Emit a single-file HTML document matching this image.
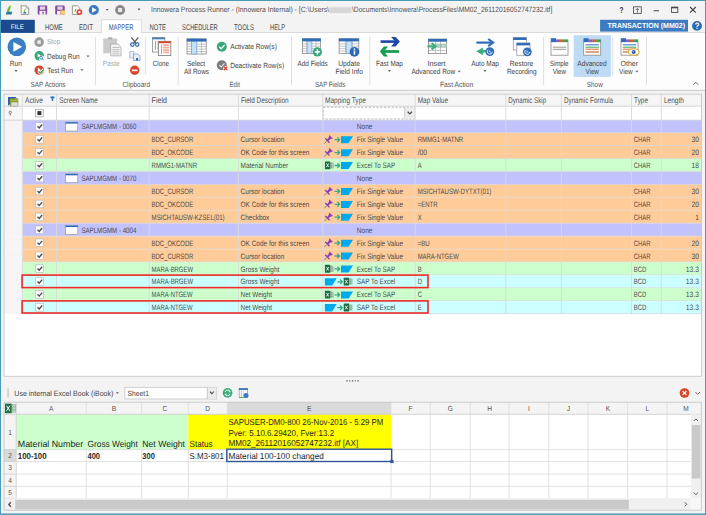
<!DOCTYPE html>
<html><head><meta charset="utf-8"><title>Innowera Process Runner</title>
<style>
html,body{margin:0;padding:0;width:706px;height:515px;overflow:hidden;background:#f3f3f3;}
svg{display:block;}
text{font-family:"Liberation Sans",sans-serif;text-rendering:geometricPrecision;}
</style></head><body>
<svg width="706" height="515" viewBox="0 0 706 515">
<rect x="0.00" y="0.00" width="706.00" height="515.00" fill="#f3f3f3"/>
<path d="M7.2 12 C6.8 9 8.5 6.5 10.9 5 C10.8 8 10 10.5 8.2 12.2 Z" fill="#6cbf2a"/>
<path d="M5.6 14.5 L7 11.6 L12.1 11.8 L11.6 14.5 Z" fill="#2f6fb5"/>
<path d="M8 12.2 L9.5 11.7 L12 13.5 L9 14 Z" fill="#1f8a6a"/>
<path d="M21.2 5.8 H26.3 L28.7 8.2 V14.4 H21.2 Z" fill="#fff" stroke="#808080" stroke-width="0.80"/>
<path d="M26.3 5.8 V8.2 H28.7" fill="none" stroke="#808080" stroke-width="0.60"/>
<rect x="20.60" y="5.20" width="1.60" height="1.60" fill="#f0a040"/>
<path d="M23.8 12 C23.6 10.5 24.4 9.3 25.6 8.6 C25.6 10 25.2 11.2 24.4 12 Z" fill="#6cbf2a"/>
<path d="M23 13.4 L23.7 12 L26.2 12.1 L26 13.4 Z" fill="#2f6fb5"/>
<rect x="37.70" y="5.60" width="9.50" height="8.90" fill="#8e44ad" rx="0.9"/>
<rect x="39.90" y="6.50" width="5.20" height="3.20" fill="#d9d9d9"/>
<rect x="39.50" y="10.90" width="6.00" height="3.60" fill="#ffffff"/>
<rect x="42.30" y="11.70" width="1.60" height="2.00" fill="#8e44ad"/>
<rect x="55.20" y="5.60" width="9.50" height="8.90" fill="#8e44ad" rx="0.9"/>
<rect x="57.40" y="6.50" width="5.20" height="3.20" fill="#d9d9d9"/>
<rect x="57.00" y="10.90" width="6.00" height="3.60" fill="#ffffff"/>
<rect x="59.80" y="11.70" width="1.60" height="2.00" fill="#8e44ad"/>
<rect x="60.40" y="10.40" width="4.60" height="4.20" fill="#f0b43c"/>
<line x1="60.40" y1="11.80" x2="65.00" y2="11.80" stroke="#fff" stroke-width="0.50"/>
<line x1="60.40" y1="13.20" x2="65.00" y2="13.20" stroke="#fff" stroke-width="0.50"/>
<path d="M72.4 5.8 H77.4 L79.8 8.2 V14.4 H72.4 Z" fill="#fff" stroke="#808080" stroke-width="0.80"/>
<path d="M74.6 12 C74.4 10.5 75.2 9.3 76.4 8.6 C76.4 10 76 11.2 75.2 12 Z" fill="#6cbf2a"/>
<circle cx="79.40" cy="12.10" r="2.90" fill="#e0443a"/>
<circle cx="79.40" cy="12.10" r="1.20" fill="#fff"/>
<circle cx="93.80" cy="10.00" r="5.10" fill="#3a7bc1"/>
<path d="M92 7.2 L96.8 10 L92 12.8 Z" fill="#fff"/>
<path d="M105.8 9 H108.6 L107.2 10.8 Z" fill="#555"/>
<circle cx="120.10" cy="10.00" r="5.00" fill="#8a8a8a"/>
<rect x="118.10" y="8.00" width="4.00" height="4.00" fill="#e8e8e8"/>
<path d="M137.6 8.6 H140.4 L139 10.4 Z" fill="#555"/>
<text x="151.00" y="12.30" font-size="7.60" fill="#505050" textLength="178.00" lengthAdjust="spacingAndGlyphs">Innowera Process Runner - (Innowera Internal) - [C:\Users\</text>
<filter id="bl" x="-20%" y="-50%" width="140%" height="200%"><feGaussianBlur stdDeviation="0.7"/></filter>
<rect x="329.30" y="7.30" width="22.20" height="5.80" fill="#d6d6d6" filter="url(#bl)"/>
<text x="352.00" y="12.30" font-size="7.60" fill="#505050" textLength="200.30" lengthAdjust="spacingAndGlyphs">\Documents\Innowera\ProcessFiles\MM02_26112016052747232.itf]</text>
<text x="619.60" y="12.60" font-size="8.60" fill="#333" font-weight="bold" textLength="4.00" lengthAdjust="spacingAndGlyphs">?</text>
<rect x="633.50" y="6.80" width="7.80" height="6.60" fill="none" stroke="#555" stroke-width="0.9"/>
<line x1="637.40" y1="8.50" x2="637.40" y2="12.60" stroke="#555" stroke-width="0.80"/>
<path d="M635.8 10 L637.4 8.3 L639 10" fill="none" stroke="#555" stroke-width="0.80"/>
<line x1="653.60" y1="10.80" x2="659.00" y2="10.80" stroke="#444" stroke-width="1.00"/>
<rect x="671.60" y="7.20" width="6.20" height="5.20" fill="none" stroke="#444" stroke-width="0.9"/>
<line x1="671.60" y1="7.60" x2="677.80" y2="7.60" stroke="#444" stroke-width="1.40"/>
<line x1="690.00" y1="7.00" x2="695.80" y2="12.60" stroke="#444" stroke-width="1.20"/>
<line x1="695.80" y1="7.00" x2="690.00" y2="12.60" stroke="#444" stroke-width="1.20"/>
<rect x="1.00" y="32.00" width="704.00" height="1.00" fill="#dadada"/>
<rect x="1.00" y="19.80" width="33.80" height="13.10" fill="#1c4a8e"/>
<text x="10.80" y="28.90" font-size="6.60" fill="#ffffff" textLength="13.00" lengthAdjust="spacingAndGlyphs">FILE</text>
<rect x="101.40" y="19.80" width="40.00" height="14.00" fill="#ffffff"/>
<path d="M101.4 33 V19.8 H141.4 V33" fill="none" stroke="#d8d8d8" stroke-width="0.90"/>
<text x="45.00" y="30.00" font-size="8.20" fill="#444" textLength="17.80" lengthAdjust="spacingAndGlyphs">HOME</text>
<text x="79.00" y="30.00" font-size="8.20" fill="#444" textLength="14.00" lengthAdjust="spacingAndGlyphs">EDIT</text>
<text x="108.70" y="30.00" font-size="8.20" fill="#2b579a" textLength="24.70" lengthAdjust="spacingAndGlyphs">MAPPER</text>
<text x="149.60" y="30.00" font-size="8.20" fill="#444" textLength="16.40" lengthAdjust="spacingAndGlyphs">NOTE</text>
<text x="182.10" y="30.00" font-size="8.20" fill="#444" textLength="35.70" lengthAdjust="spacingAndGlyphs">SCHEDULER</text>
<text x="234.00" y="30.00" font-size="8.20" fill="#444" textLength="20.00" lengthAdjust="spacingAndGlyphs">TOOLS</text>
<text x="270.00" y="30.00" font-size="8.20" fill="#444" textLength="15.00" lengthAdjust="spacingAndGlyphs">HELP</text>
<rect x="600.10" y="19.80" width="87.90" height="11.80" fill="#3a7bc1"/>
<text x="607.50" y="28.40" font-size="7.40" fill="#ffffff" font-weight="bold" textLength="77.50" lengthAdjust="spacingAndGlyphs">TRANSACTION (MM02)</text>
<circle cx="697.00" cy="25.90" r="4.90" fill="#2a6ab5"/>
<text x="697.00" y="29.00" font-size="9.20" fill="#fff" text-anchor="middle" font-weight="bold" textLength="4.60" lengthAdjust="spacingAndGlyphs">?</text>
<rect x="1.00" y="33.00" width="704.00" height="57.00" fill="#fdfdfd"/>
<rect x="1.00" y="89.80" width="704.00" height="1.00" fill="#c9c9c9"/>
<line x1="95.50" y1="37.00" x2="95.50" y2="85.00" stroke="#dcdcdc" stroke-width="0.90"/>
<line x1="178.20" y1="37.00" x2="178.20" y2="85.00" stroke="#dcdcdc" stroke-width="0.90"/>
<line x1="291.50" y1="37.00" x2="291.50" y2="85.00" stroke="#dcdcdc" stroke-width="0.90"/>
<line x1="369.80" y1="37.00" x2="369.80" y2="85.00" stroke="#dcdcdc" stroke-width="0.90"/>
<line x1="543.60" y1="37.00" x2="543.60" y2="85.00" stroke="#dcdcdc" stroke-width="0.90"/>
<line x1="646.50" y1="37.00" x2="646.50" y2="85.00" stroke="#dcdcdc" stroke-width="0.90"/>
<line x1="145.60" y1="37.80" x2="145.60" y2="74.00" stroke="#dcdcdc" stroke-width="0.90"/>
<line x1="612.70" y1="38.20" x2="612.70" y2="76.00" stroke="#dcdcdc" stroke-width="0.90"/>
<text x="30.60" y="87.00" font-size="7.50" fill="#555555" textLength="34.90" lengthAdjust="spacingAndGlyphs">SAP Actions</text>
<text x="122.40" y="87.00" font-size="7.50" fill="#555555" textLength="27.60" lengthAdjust="spacingAndGlyphs">Clipboard</text>
<text x="229.60" y="87.00" font-size="7.50" fill="#555555" textLength="10.40" lengthAdjust="spacingAndGlyphs">Edit</text>
<text x="315.00" y="87.00" font-size="7.50" fill="#555555" textLength="30.20" lengthAdjust="spacingAndGlyphs">SAP Fields</text>
<text x="439.90" y="87.00" font-size="7.50" fill="#555555" textLength="33.40" lengthAdjust="spacingAndGlyphs">Fast Action</text>
<text x="586.80" y="87.00" font-size="7.50" fill="#555555" textLength="16.00" lengthAdjust="spacingAndGlyphs">Show</text>
<path d="M693.3 84.8 L695.8 82.3 L698.3 84.8" fill="none" stroke="#555" stroke-width="0.90"/>
<circle cx="16.80" cy="46.80" r="9.30" fill="#3b7ec4"/>
<path d="M13.4 41.9 L22.2 46.8 L13.4 51.7 Z" fill="#fff"/>
<text x="9.80" y="66.00" font-size="7.50" fill="#444" textLength="12.20" lengthAdjust="spacingAndGlyphs">Run</text>
<path d="M14.40 70.10 h3.2 l-1.6 1.8 z" fill="#666"/>
<circle cx="39.10" cy="42.10" r="4.80" fill="#9b9b9b"/>
<rect x="37.40" y="40.40" width="3.40" height="3.40" fill="#f0f0f0"/>
<text x="47.00" y="44.30" font-size="7.50" fill="#a8a8a8" textLength="13.20" lengthAdjust="spacingAndGlyphs">Stop</text>
<circle cx="39.30" cy="55.80" r="4.80" fill="#3aa57a"/>
<path d="M37.6 53.6 L40.6 55.6 L37.6 57.6 Z" fill="#fff"/>
<circle cx="41.60" cy="58.20" r="2.60" fill="#fdfdfd"/>
<circle cx="41.10" cy="57.70" r="1.40" fill="none" stroke="#3a70c8" stroke-width="0.9"/>
<line x1="42.10" y1="58.70" x2="43.70" y2="60.30" stroke="#3a70c8" stroke-width="1.00"/>
<text x="47.00" y="58.70" font-size="7.50" fill="#444" textLength="32.60" lengthAdjust="spacingAndGlyphs">Debug Run</text>
<path d="M86.40 55.40 h3.2 l-1.6 1.8 z" fill="#666"/>
<circle cx="39.30" cy="70.20" r="4.80" fill="#d5472c"/>
<path d="M37.8 67.6 L41.0 70.0 L37.8 72.4 Z" fill="#fff"/>
<path d="M38.6 71.4 L40.2 73.0 L43.8 69.6" fill="none" stroke="#fdfdfd" stroke-width="2.80"/>
<path d="M38.6 71.4 L40.2 73.0 L43.8 69.6" fill="none" stroke="#2f9a4a" stroke-width="1.30"/>
<text x="47.30" y="72.70" font-size="7.50" fill="#444" textLength="25.80" lengthAdjust="spacingAndGlyphs">Test Run</text>
<path d="M80.40 69.30 h3.2 l-1.6 1.8 z" fill="#666"/>
<rect x="103.20" y="38.60" width="13.90" height="14.70" fill="#cbcbcb" rx="0.6"/>
<rect x="107.80" y="37.20" width="4.60" height="2.20" fill="#b0b0b0" rx="1"/>
<path d="M110.7 44.1 H117.8 L121 47.3 V55.8 H110.7 Z" fill="#f4f4f4" stroke="#a8a8a8" stroke-width="0.80"/>
<line x1="112.40" y1="47.50" x2="119.40" y2="47.50" stroke="#a8a8a8" stroke-width="0.70"/>
<line x1="112.40" y1="49.60" x2="119.40" y2="49.60" stroke="#a8a8a8" stroke-width="0.70"/>
<line x1="112.40" y1="51.70" x2="119.40" y2="51.70" stroke="#a8a8a8" stroke-width="0.70"/>
<line x1="112.40" y1="53.80" x2="119.40" y2="53.80" stroke="#a8a8a8" stroke-width="0.70"/>
<text x="102.80" y="65.70" font-size="7.50" fill="#a8a8a8" textLength="16.90" lengthAdjust="spacingAndGlyphs">Paste</text>
<path d="M131.3 37.3 L136.3 43.6 M138.3 37.3 L133.3 43.6" fill="none" stroke="#5a5a5a" stroke-width="1.30"/>
<circle cx="132.30" cy="44.60" r="1.70" fill="none" stroke="#2f6fb5" stroke-width="1.2"/>
<circle cx="137.20" cy="44.60" r="1.70" fill="none" stroke="#2f6fb5" stroke-width="1.2"/>
<path d="M129.8 51.5 H134 V58 H129.8 Z" fill="#e8eef8" stroke="#9aa8c0" stroke-width="0.70"/>
<path d="M133.5 54 H138 L140 56 V60.5 H133.5 Z" fill="#e8eef8" stroke="#7f93b5" stroke-width="0.70"/>
<rect x="136.00" y="58.00" width="2.20" height="2.40" fill="#2f6fb5"/>
<circle cx="134.70" cy="70.30" r="4.70" fill="#d5472c"/>
<rect x="131.90" y="69.50" width="5.60" height="1.70" fill="#fff"/>
<rect x="152.40" y="37.60" width="12.40" height="14.40" fill="#fff" stroke="#8a8a8a" stroke-width="0.8"/>
<rect x="152.40" y="37.60" width="12.40" height="1.70" fill="#3a7bc1"/>
<line x1="155.40" y1="41.00" x2="155.40" y2="50.00" stroke="#6a6a6a" stroke-width="0.70"/>
<line x1="157.60" y1="41.00" x2="157.60" y2="50.00" stroke="#b0b0b0" stroke-width="0.60"/>
<rect x="158.60" y="41.30" width="12.20" height="14.30" fill="#fff" stroke="#7a7a7a" stroke-width="0.8"/>
<rect x="158.60" y="41.30" width="12.20" height="1.90" fill="#d5472c"/>
<line x1="161.60" y1="44.20" x2="161.60" y2="54.20" stroke="#e36a55" stroke-width="0.80"/>
<rect x="163.20" y="44.40" width="5.80" height="1.60" fill="#f2a593"/>
<rect x="163.20" y="46.80" width="5.80" height="1.60" fill="#f2a593"/>
<rect x="163.20" y="49.20" width="5.80" height="1.60" fill="#f2a593"/>
<rect x="163.20" y="51.60" width="5.80" height="1.60" fill="#f2a593"/>
<text x="152.80" y="65.70" font-size="7.50" fill="#444" textLength="16.20" lengthAdjust="spacingAndGlyphs">Clone</text>
<rect x="187.00" y="38.90" width="19.20" height="15.10" fill="#fff" stroke="#8a8a8a" stroke-width="0.8"/>
<line x1="187.00" y1="44.16" x2="206.20" y2="44.16" stroke="#a0a0a0" stroke-width="0.60"/>
<line x1="187.00" y1="46.62" x2="206.20" y2="46.62" stroke="#a0a0a0" stroke-width="0.60"/>
<line x1="187.00" y1="49.08" x2="206.20" y2="49.08" stroke="#a0a0a0" stroke-width="0.60"/>
<line x1="187.00" y1="51.54" x2="206.20" y2="51.54" stroke="#a0a0a0" stroke-width="0.60"/>
<line x1="191.80" y1="38.90" x2="191.80" y2="54.00" stroke="#a0a0a0" stroke-width="0.60"/>
<line x1="196.60" y1="38.90" x2="196.60" y2="54.00" stroke="#a0a0a0" stroke-width="0.60"/>
<line x1="201.40" y1="38.90" x2="201.40" y2="54.00" stroke="#a0a0a0" stroke-width="0.60"/>
<rect x="191.70" y="38.90" width="5.10" height="15.10" fill="#c4e2f9" stroke="#6a9ad0" stroke-width="0.6"/>
<rect x="186.80" y="38.70" width="19.60" height="2.90" fill="#2f6db8"/>
<text x="187.00" y="66.00" font-size="7.50" fill="#444" textLength="18.20" lengthAdjust="spacingAndGlyphs">Select</text>
<text x="183.90" y="73.80" font-size="7.50" fill="#444" textLength="25.20" lengthAdjust="spacingAndGlyphs">All Rows</text>
<circle cx="221.80" cy="46.70" r="5.00" fill="#3aa57a"/>
<path d="M219.2 46.8 L221.2 48.8 L224.6 44.8" fill="none" stroke="#fff" stroke-width="1.30"/>
<text x="230.20" y="49.40" font-size="7.50" fill="#444" textLength="46.70" lengthAdjust="spacingAndGlyphs">Activate Row(s)</text>
<circle cx="221.80" cy="65.20" r="5.00" fill="#7c7c7c"/>
<path d="M219.3 65.2 L221.2 67.0 L224.4 63.4" fill="none" stroke="#e8e8e8" stroke-width="1.10"/>
<circle cx="225.60" cy="68.40" r="2.40" fill="#fdfdfd"/>
<path d="M223.9 66.7 L227.3 70.1 M227.3 66.7 L223.9 70.1" fill="none" stroke="#e0352b" stroke-width="1.30"/>
<text x="230.20" y="68.00" font-size="7.50" fill="#444" textLength="53.90" lengthAdjust="spacingAndGlyphs">Deactivate Row(s)</text>
<rect x="302.40" y="38.70" width="18.20" height="14.70" fill="#fff" stroke="#8a8a8a" stroke-width="0.8"/>
<line x1="302.40" y1="43.88" x2="320.60" y2="43.88" stroke="#a0a0a0" stroke-width="0.60"/>
<line x1="302.40" y1="46.26" x2="320.60" y2="46.26" stroke="#a0a0a0" stroke-width="0.60"/>
<line x1="302.40" y1="48.64" x2="320.60" y2="48.64" stroke="#a0a0a0" stroke-width="0.60"/>
<line x1="302.40" y1="51.02" x2="320.60" y2="51.02" stroke="#a0a0a0" stroke-width="0.60"/>
<line x1="306.95" y1="38.70" x2="306.95" y2="53.40" stroke="#a0a0a0" stroke-width="0.60"/>
<line x1="311.50" y1="38.70" x2="311.50" y2="53.40" stroke="#a0a0a0" stroke-width="0.60"/>
<line x1="316.05" y1="38.70" x2="316.05" y2="53.40" stroke="#a0a0a0" stroke-width="0.60"/>
<rect x="307.10" y="38.70" width="4.80" height="14.70" fill="#c4e2f9" stroke="#6a9ad0" stroke-width="0.6"/>
<rect x="302.20" y="38.50" width="18.60" height="2.90" fill="#2f6db8"/>
<circle cx="317.40" cy="51.90" r="4.60" fill="#3aa57a"/>
<rect x="314.70" y="51.15" width="5.40" height="1.50" fill="#fff"/>
<rect x="316.65" y="49.20" width="1.50" height="5.40" fill="#fff"/>
<text x="297.60" y="65.50" font-size="7.50" fill="#444" textLength="30.00" lengthAdjust="spacingAndGlyphs">Add Fields</text>
<rect x="339.10" y="38.70" width="19.70" height="14.70" fill="#fff" stroke="#8a8a8a" stroke-width="0.8"/>
<line x1="339.10" y1="43.88" x2="358.80" y2="43.88" stroke="#a0a0a0" stroke-width="0.60"/>
<line x1="339.10" y1="46.26" x2="358.80" y2="46.26" stroke="#a0a0a0" stroke-width="0.60"/>
<line x1="339.10" y1="48.64" x2="358.80" y2="48.64" stroke="#a0a0a0" stroke-width="0.60"/>
<line x1="339.10" y1="51.02" x2="358.80" y2="51.02" stroke="#a0a0a0" stroke-width="0.60"/>
<line x1="345.67" y1="38.70" x2="345.67" y2="53.40" stroke="#a0a0a0" stroke-width="0.60"/>
<line x1="352.23" y1="38.70" x2="352.23" y2="53.40" stroke="#a0a0a0" stroke-width="0.60"/>
<rect x="346.10" y="38.70" width="5.80" height="14.70" fill="#c4e2f9" stroke="#6a9ad0" stroke-width="0.6"/>
<rect x="338.90" y="38.50" width="20.10" height="2.90" fill="#2f6db8"/>
<circle cx="354.40" cy="51.90" r="4.80" fill="#2a6ab5"/>
<rect x="353.70" y="50.50" width="1.50" height="4.20" fill="#fff"/>
<rect x="353.70" y="48.40" width="1.50" height="1.40" fill="#fff"/>
<text x="338.20" y="65.50" font-size="7.50" fill="#444" textLength="21.70" lengthAdjust="spacingAndGlyphs">Update</text>
<text x="335.60" y="73.50" font-size="7.50" fill="#444" textLength="27.30" lengthAdjust="spacingAndGlyphs">Field Info</text>
<rect x="380.60" y="40.30" width="15.50" height="2.60" fill="#1a47a8"/>
<path d="M391.1 37 H395.5 L399.9 41.6 L395.5 46.5 H391.1 L395.3 41.6 Z" fill="#1a47a8"/>
<rect x="383.50" y="50.10" width="15.50" height="2.80" fill="#14a050"/>
<path d="M388 46.6 H383.9 L379.9 51.5 L383.9 56.5 H388 L384 51.5 Z" fill="#14a050"/>
<text x="376.10" y="65.60" font-size="7.50" fill="#444" textLength="26.80" lengthAdjust="spacingAndGlyphs">Fast Map</text>
<path d="M387.80 70.10 h3.2 l-1.6 1.8 z" fill="#666"/>
<rect x="428.50" y="39.10" width="18.10" height="14.50" fill="#fff" stroke="#8a8a8a" stroke-width="0.8"/>
<rect x="435.50" y="44.20" width="11.10" height="3.00" fill="#a8e0c4"/>
<line x1="428.50" y1="44.20" x2="446.60" y2="44.20" stroke="#a0a0a0" stroke-width="0.60"/>
<line x1="428.50" y1="47.20" x2="446.60" y2="47.20" stroke="#a0a0a0" stroke-width="0.60"/>
<line x1="428.50" y1="50.50" x2="446.60" y2="50.50" stroke="#a0a0a0" stroke-width="0.60"/>
<line x1="435.50" y1="39.10" x2="435.50" y2="53.60" stroke="#a0a0a0" stroke-width="0.60"/>
<line x1="440.50" y1="39.10" x2="440.50" y2="53.60" stroke="#a0a0a0" stroke-width="0.60"/>
<rect x="428.30" y="38.90" width="18.50" height="2.80" fill="#2f6db8"/>
<rect x="427.40" y="45.30" width="6.50" height="2.00" fill="#3aaa7a"/>
<path d="M431.6 43.2 L435.6 46.3 L431.6 49.4" fill="none" stroke="#3aaa7a" stroke-width="2.00"/>
<text x="427.60" y="65.60" font-size="7.50" fill="#444" textLength="17.90" lengthAdjust="spacingAndGlyphs">Insert</text>
<text x="411.40" y="73.60" font-size="7.50" fill="#444" textLength="43.80" lengthAdjust="spacingAndGlyphs">Advanced Row</text>
<path d="M457.60 70.70 h3.2 l-1.6 1.8 z" fill="#666"/>
<rect x="476.40" y="41.50" width="15.20" height="2.20" fill="#2f6db8"/>
<path d="M488.2 39.0 L493.2 42.6 L488.2 46.2" fill="none" stroke="#2f6db8" stroke-width="2.10"/>
<rect x="479.00" y="50.10" width="7.00" height="2.40" fill="#3aaa7a"/>
<path d="M482.9 47.4 L476.4 51.3 L482.9 55.2 Z" fill="#3aaa7a"/>
<circle cx="489.80" cy="51.60" r="4.40" fill="#2f6db8"/>
<path d="M488.20 49.70 A2.5 2.5 0 1 0 492.30 51.80" fill="none" stroke="#fff" stroke-width="0.90"/>
<path d="M489.60 50.40 L489.60 52.00 L491.00 52.00" fill="none" stroke="#fff" stroke-width="0.70"/>
<text x="471.20" y="65.60" font-size="7.50" fill="#444" textLength="27.70" lengthAdjust="spacingAndGlyphs">Auto Map</text>
<path d="M483.30 70.10 h3.2 l-1.6 1.8 z" fill="#666"/>
<rect x="513.30" y="37.60" width="13.20" height="12.30" fill="#fff" stroke="#9a9a9a" stroke-width="0.8"/>
<rect x="513.10" y="37.50" width="13.40" height="2.50" fill="#2f6db8"/>
<rect x="516.80" y="43.00" width="13.20" height="12.30" fill="#fff" stroke="#9a9a9a" stroke-width="0.8"/>
<rect x="516.60" y="42.90" width="13.40" height="2.50" fill="#2f6db8"/>
<circle cx="527.30" cy="51.80" r="4.40" fill="#2f6db8"/>
<path d="M525.70 49.90 A2.5 2.5 0 1 0 529.80 52.00" fill="none" stroke="#fff" stroke-width="0.90"/>
<path d="M527.10 50.60 L527.10 52.20 L528.50 52.20" fill="none" stroke="#fff" stroke-width="0.70"/>
<text x="509.70" y="65.60" font-size="7.50" fill="#444" textLength="23.60" lengthAdjust="spacingAndGlyphs">Restore</text>
<text x="506.90" y="73.60" font-size="7.50" fill="#444" textLength="29.60" lengthAdjust="spacingAndGlyphs">Recording</text>
<rect x="573.70" y="35.20" width="37.20" height="41.70" fill="#bddbf4"/>
<rect x="551.00" y="41.80" width="17.00" height="13.40" fill="#fff" stroke="#8a8a8a" stroke-width="0.8"/>
<rect x="550.80" y="38.20" width="5.20" height="3.80" fill="#2f6db8"/>
<rect x="556.00" y="39.40" width="4.00" height="2.60" fill="#8e5cc0"/>
<rect x="560.00" y="39.40" width="4.00" height="2.60" fill="#d0642c"/>
<rect x="564.00" y="39.40" width="4.20" height="2.60" fill="#3aa05a"/>
<line x1="552.80" y1="47.20" x2="566.20" y2="47.20" stroke="#8a8a8a" stroke-width="0.90"/>
<line x1="552.80" y1="49.30" x2="566.20" y2="49.30" stroke="#8a8a8a" stroke-width="0.90"/>
<text x="549.80" y="65.80" font-size="7.50" fill="#444" textLength="18.70" lengthAdjust="spacingAndGlyphs">Simple</text>
<text x="552.70" y="73.60" font-size="7.50" fill="#444" textLength="13.40" lengthAdjust="spacingAndGlyphs">View</text>
<rect x="583.70" y="41.80" width="17.00" height="13.40" fill="#fff" stroke="#8a8a8a" stroke-width="0.8"/>
<rect x="583.50" y="38.20" width="5.20" height="3.80" fill="#2f6db8"/>
<rect x="588.70" y="39.40" width="4.00" height="2.60" fill="#8e5cc0"/>
<rect x="592.70" y="39.40" width="4.00" height="2.60" fill="#d0642c"/>
<rect x="596.70" y="39.40" width="4.20" height="2.60" fill="#3aa05a"/>
<line x1="585.50" y1="44.80" x2="598.90" y2="44.80" stroke="#5a8ed0" stroke-width="1.30"/>
<line x1="585.50" y1="47.20" x2="598.90" y2="47.20" stroke="#3aa05a" stroke-width="1.00"/>
<line x1="585.50" y1="49.30" x2="598.90" y2="49.30" stroke="#e0a070" stroke-width="1.60"/>
<line x1="585.50" y1="52.00" x2="598.90" y2="52.00" stroke="#b8602c" stroke-width="1.10"/>
<text x="577.30" y="65.80" font-size="7.50" fill="#444" textLength="29.40" lengthAdjust="spacingAndGlyphs">Advanced</text>
<text x="585.50" y="73.60" font-size="7.50" fill="#444" textLength="13.30" lengthAdjust="spacingAndGlyphs">View</text>
<rect x="621.00" y="41.80" width="17.00" height="13.40" fill="#fff" stroke="#8a8a8a" stroke-width="0.8"/>
<rect x="620.80" y="38.20" width="5.20" height="3.80" fill="#2f6db8"/>
<rect x="626.00" y="39.40" width="4.00" height="2.60" fill="#8e5cc0"/>
<rect x="630.00" y="39.40" width="4.00" height="2.60" fill="#d0642c"/>
<rect x="634.00" y="39.40" width="4.20" height="2.60" fill="#3aa05a"/>
<line x1="622.80" y1="44.80" x2="636.20" y2="44.80" stroke="#5a8ed0" stroke-width="1.30"/>
<line x1="622.80" y1="47.20" x2="636.20" y2="47.20" stroke="#3aa05a" stroke-width="1.00"/>
<line x1="622.80" y1="49.30" x2="636.20" y2="49.30" stroke="#e0a070" stroke-width="1.60"/>
<line x1="622.80" y1="52.00" x2="636.20" y2="52.00" stroke="#b8602c" stroke-width="1.10"/>
<ellipse cx="633.7" cy="52.0" rx="5.4" ry="3.2" fill="#fff" stroke="#e0a530" stroke-width="1.1"/>
<circle cx="633.70" cy="52.00" r="2.10" fill="#2f5fa8"/>
<circle cx="633.20" cy="51.50" r="0.60" fill="#cfe0f5"/>
<text x="620.50" y="65.80" font-size="7.50" fill="#444" textLength="17.50" lengthAdjust="spacingAndGlyphs">Other</text>
<text x="619.00" y="73.60" font-size="7.50" fill="#444" textLength="13.70" lengthAdjust="spacingAndGlyphs">View</text>
<path d="M635.30 70.70 h3.2 l-1.6 1.8 z" fill="#666"/>
<rect x="4.00" y="94.20" width="697.50" height="282.10" fill="#ffffff"/>
<rect x="4.00" y="94.20" width="697.50" height="12.00" fill="#f5f5f5"/>
<rect x="4.00" y="106.20" width="18.40" height="14.00" fill="#f7f7f7"/>
<text x="25.00" y="103.30" font-size="8.20" fill="#505050" textLength="18.00" lengthAdjust="spacingAndGlyphs">Active</text>
<text x="59.20" y="103.30" font-size="8.20" fill="#505050" textLength="38.60" lengthAdjust="spacingAndGlyphs">Screen Name</text>
<text x="151.60" y="103.30" font-size="8.20" fill="#505050" textLength="15.40" lengthAdjust="spacingAndGlyphs">Field</text>
<text x="240.90" y="103.30" font-size="8.20" fill="#505050" textLength="47.60" lengthAdjust="spacingAndGlyphs">Field Description</text>
<text x="325.00" y="103.30" font-size="8.20" fill="#505050" textLength="40.90" lengthAdjust="spacingAndGlyphs">Mapping Type</text>
<text x="417.70" y="103.30" font-size="8.20" fill="#505050" textLength="30.30" lengthAdjust="spacingAndGlyphs">Map Value</text>
<text x="508.20" y="103.30" font-size="8.20" fill="#505050" textLength="37.90" lengthAdjust="spacingAndGlyphs">Dynamic Skip</text>
<text x="564.00" y="103.30" font-size="8.20" fill="#505050" textLength="49.00" lengthAdjust="spacingAndGlyphs">Dynamic Formula</text>
<text x="634.10" y="103.30" font-size="8.20" fill="#505050" textLength="13.90" lengthAdjust="spacingAndGlyphs">Type</text>
<text x="663.90" y="103.30" font-size="8.20" fill="#505050" textLength="20.10" lengthAdjust="spacingAndGlyphs">Length</text>
<path d="M49.9 96.9 Q52.45 95.5 55 96.9 L53.2 99.0 V101.0 H51.7 V99.0 Z" fill="#2a7fd0"/>
<path d="M8 97 H16.6 L8 105.9 Z" fill="#2a5ea8"/>
<rect x="10.00" y="98.80" width="7.90" height="7.80" fill="#ffffff" stroke="#6a7a2a" stroke-width="0.6"/>
<rect x="10.00" y="98.80" width="7.90" height="3.70" fill="#8c9c22"/>
<line x1="10.50" y1="100.60" x2="17.40" y2="100.60" stroke="#c8d070" stroke-width="0.60"/>
<line x1="11.50" y1="104.00" x2="17.40" y2="104.00" stroke="#9a9a9a" stroke-width="0.60"/>
<line x1="11.50" y1="105.60" x2="17.40" y2="105.60" stroke="#9a9a9a" stroke-width="0.60"/>
<line x1="10.80" y1="102.50" x2="10.80" y2="106.60" stroke="#6a8a2a" stroke-width="1.20"/>
<circle cx="10.20" cy="112.40" r="1.20" fill="none" stroke="#666" stroke-width="0.8"/>
<line x1="10.20" y1="113.60" x2="10.20" y2="115.80" stroke="#777" stroke-width="0.80"/>
<rect x="35.60" y="109.30" width="7.60" height="7.60" fill="#fff" stroke="#9a9a9a" stroke-width="0.7"/>
<rect x="37.40" y="111.10" width="4.00" height="4.00" fill="#333"/>
<rect x="323.20" y="107.20" width="91.40" height="11.80" fill="#fff" stroke="#a0a0a0" stroke-width="0.8" stroke-dasharray="2.2 1.6"/>
<rect x="404.70" y="107.60" width="10.20" height="11.00" fill="#ececec"/>
<line x1="404.70" y1="107.60" x2="404.70" y2="118.60" stroke="#c4c4c4" stroke-width="0.80"/>
<path d="M407.7 111.8 L409.8 113.9 L411.9 111.8" fill="none" stroke="#505050" stroke-width="1.30"/>
<rect x="22.40" y="120.10" width="679.10" height="12.93" fill="#c2c2ff"/>
<rect x="4.00" y="120.10" width="18.40" height="12.93" fill="#f5f5f5"/>
<rect x="35.70" y="122.60" width="7.60" height="7.60" fill="#fbfbfb" stroke="#b5b5b5" stroke-width="0.6"/>
<path d="M37.5 126.30 L39.2 128.00 L42.2 124.50" fill="none" stroke="#4a4a4a" stroke-width="1.35"/>
<rect x="65.60" y="122.20" width="12.20" height="8.80" fill="#fff" stroke="#8a8a8a" stroke-width="0.6"/>
<rect x="65.60" y="122.20" width="12.20" height="1.40" fill="#2a6ab5"/>
<text x="81.40" y="129.30" font-size="7.80" fill="#4a4a4a" textLength="54.90" lengthAdjust="spacingAndGlyphs">SAPLMGMM - 0060</text>
<text x="356.80" y="129.30" font-size="7.80" fill="#4a4a4a" textLength="15.60" lengthAdjust="spacingAndGlyphs">None</text>
<line x1="22.40" y1="132.63" x2="701.50" y2="132.63" stroke="#d9d9d9" stroke-width="0.80"/>
<rect x="22.40" y="133.03" width="679.10" height="12.93" fill="#ffcc99"/>
<rect x="4.00" y="133.03" width="18.40" height="12.93" fill="#f5f5f5"/>
<rect x="35.70" y="135.53" width="7.60" height="7.60" fill="#fbfbfb" stroke="#b5b5b5" stroke-width="0.6"/>
<path d="M37.5 139.23 L39.2 140.93 L42.2 137.43" fill="none" stroke="#4a4a4a" stroke-width="1.35"/>
<text x="151.60" y="142.23" font-size="7.80" fill="#4a4a4a" textLength="41.59" lengthAdjust="spacingAndGlyphs">BDC_CURSOR</text>
<text x="240.60" y="142.23" font-size="7.80" fill="#4a4a4a" textLength="43.73" lengthAdjust="spacingAndGlyphs">Cursor location</text>
<g transform="translate(329.00 138.88) rotate(45)">
<path d="M0 3 V6.8" fill="none" stroke="#707070" stroke-width="0.80"/>
<path d="M-2.5 -3.1 H2.5 L1.7 -1.8 L1.0 -0.2 L1.0 1.7 L3.1 1.7 L3.1 3.0 L-3.1 3.0 L-3.1 1.7 L-1.0 1.7 L-1.0 -0.2 L-1.7 -1.8 Z" fill="#8440bc"/>
</g>
<path d="M334.50 139.63 h4.6 M337.40 137.33 l2.2 2.3 l-2.2 2.3" fill="none" stroke="#3aaa80" stroke-width="1.30"/>
<path d="M341.00 136.23 h12 l-4.4 7 h-7.6 z" fill="#00a9ec"/>
<text x="356.80" y="142.23" font-size="7.80" fill="#4a4a4a" textLength="46.21" lengthAdjust="spacingAndGlyphs">Fix Single Value</text>
<text x="417.70" y="142.23" font-size="7.80" fill="#4a4a4a" textLength="45.46" lengthAdjust="spacingAndGlyphs">RMMG1-MATNR</text>
<text x="633.80" y="142.23" font-size="7.80" fill="#4a4a4a" textLength="16.63" lengthAdjust="spacingAndGlyphs">CHAR</text>
<text x="698.90" y="142.23" font-size="7.80" fill="#4a4a4a" text-anchor="end" textLength="7.51" lengthAdjust="spacingAndGlyphs">30</text>
<line x1="22.40" y1="145.56" x2="701.50" y2="145.56" stroke="#d9d9d9" stroke-width="0.80"/>
<rect x="22.40" y="145.96" width="679.10" height="12.93" fill="#ffcc99"/>
<rect x="4.00" y="145.96" width="18.40" height="12.93" fill="#f5f5f5"/>
<rect x="35.70" y="148.46" width="7.60" height="7.60" fill="#fbfbfb" stroke="#b5b5b5" stroke-width="0.6"/>
<path d="M37.5 152.16 L39.2 153.86 L42.2 150.36" fill="none" stroke="#4a4a4a" stroke-width="1.35"/>
<text x="151.60" y="155.16" font-size="7.80" fill="#4a4a4a" textLength="41.59" lengthAdjust="spacingAndGlyphs">BDC_OKCODE</text>
<text x="240.60" y="155.16" font-size="7.80" fill="#4a4a4a" textLength="68.79" lengthAdjust="spacingAndGlyphs">OK Code for this screen</text>
<g transform="translate(329.00 151.81) rotate(45)">
<path d="M0 3 V6.8" fill="none" stroke="#707070" stroke-width="0.80"/>
<path d="M-2.5 -3.1 H2.5 L1.7 -1.8 L1.0 -0.2 L1.0 1.7 L3.1 1.7 L3.1 3.0 L-3.1 3.0 L-3.1 1.7 L-1.0 1.7 L-1.0 -0.2 L-1.7 -1.8 Z" fill="#8440bc"/>
</g>
<path d="M334.50 152.56 h4.6 M337.40 150.26 l2.2 2.3 l-2.2 2.3" fill="none" stroke="#3aaa80" stroke-width="1.30"/>
<path d="M341.00 149.16 h12 l-4.4 7 h-7.6 z" fill="#00a9ec"/>
<text x="356.80" y="155.16" font-size="7.80" fill="#4a4a4a" textLength="46.21" lengthAdjust="spacingAndGlyphs">Fix Single Value</text>
<text x="417.70" y="155.16" font-size="7.80" fill="#4a4a4a" textLength="9.38" lengthAdjust="spacingAndGlyphs">/00</text>
<text x="633.80" y="155.16" font-size="7.80" fill="#4a4a4a" textLength="16.63" lengthAdjust="spacingAndGlyphs">CHAR</text>
<text x="698.90" y="155.16" font-size="7.80" fill="#4a4a4a" text-anchor="end" textLength="7.51" lengthAdjust="spacingAndGlyphs">20</text>
<line x1="22.40" y1="158.49" x2="701.50" y2="158.49" stroke="#d9d9d9" stroke-width="0.80"/>
<rect x="22.40" y="158.89" width="679.10" height="12.93" fill="#ccffcc"/>
<rect x="4.00" y="158.89" width="18.40" height="12.93" fill="#f5f5f5"/>
<rect x="35.70" y="161.39" width="7.60" height="7.60" fill="#fbfbfb" stroke="#b5b5b5" stroke-width="0.6"/>
<path d="M37.5 165.09 L39.2 166.79 L42.2 163.29" fill="none" stroke="#4a4a4a" stroke-width="1.35"/>
<text x="151.60" y="168.09" font-size="7.80" fill="#4a4a4a" textLength="45.46" lengthAdjust="spacingAndGlyphs">RMMG1-MATNR</text>
<text x="240.60" y="168.09" font-size="7.80" fill="#4a4a4a" textLength="47.52" lengthAdjust="spacingAndGlyphs">Material Number</text>
<rect x="329.10" y="162.19" width="4.60" height="6.40" fill="#b9ccbf"/>
<line x1="329.10" y1="163.69" x2="333.70" y2="163.69" stroke="#7f9e89" stroke-width="0.50"/>
<line x1="329.10" y1="165.49" x2="333.70" y2="165.49" stroke="#7f9e89" stroke-width="0.50"/>
<line x1="329.10" y1="167.29" x2="333.70" y2="167.29" stroke="#7f9e89" stroke-width="0.50"/>
<line x1="331.50" y1="162.19" x2="331.50" y2="168.59" stroke="#7f9e89" stroke-width="0.50"/>
<rect x="324.90" y="161.39" width="5.40" height="7.90" fill="#1d6b40" rx="0.6"/>
<path d="M326.50 163.59 l2.2 3.5 M328.70 163.59 l-2.2 3.5" fill="none" stroke="#fff" stroke-width="0.90"/>
<path d="M334.50 165.49 h4.6 M337.40 163.19 l2.2 2.3 l-2.2 2.3" fill="none" stroke="#3aaa80" stroke-width="1.30"/>
<path d="M341.00 162.09 h12 l-4.4 7 h-7.6 z" fill="#00a9ec"/>
<text x="356.80" y="168.09" font-size="7.80" fill="#4a4a4a" textLength="38.34" lengthAdjust="spacingAndGlyphs">Excel To SAP</text>
<text x="417.70" y="168.09" font-size="7.80" fill="#4a4a4a" textLength="3.92" lengthAdjust="spacingAndGlyphs">A</text>
<text x="633.80" y="168.09" font-size="7.80" fill="#4a4a4a" textLength="16.63" lengthAdjust="spacingAndGlyphs">CHAR</text>
<text x="698.90" y="168.09" font-size="7.80" fill="#4a4a4a" text-anchor="end" textLength="7.51" lengthAdjust="spacingAndGlyphs">18</text>
<line x1="22.40" y1="171.42" x2="701.50" y2="171.42" stroke="#d9d9d9" stroke-width="0.80"/>
<rect x="22.40" y="171.82" width="679.10" height="12.93" fill="#c2c2ff"/>
<rect x="4.00" y="171.82" width="18.40" height="12.93" fill="#f5f5f5"/>
<rect x="35.70" y="174.32" width="7.60" height="7.60" fill="#fbfbfb" stroke="#b5b5b5" stroke-width="0.6"/>
<path d="M37.5 178.02 L39.2 179.72 L42.2 176.22" fill="none" stroke="#4a4a4a" stroke-width="1.35"/>
<rect x="65.60" y="173.92" width="12.20" height="8.80" fill="#fff" stroke="#8a8a8a" stroke-width="0.6"/>
<rect x="65.60" y="173.92" width="12.20" height="1.40" fill="#2a6ab5"/>
<text x="81.40" y="181.02" font-size="7.80" fill="#4a4a4a" textLength="54.90" lengthAdjust="spacingAndGlyphs">SAPLMGMM - 0070</text>
<text x="356.80" y="181.02" font-size="7.80" fill="#4a4a4a" textLength="15.60" lengthAdjust="spacingAndGlyphs">None</text>
<line x1="22.40" y1="184.35" x2="701.50" y2="184.35" stroke="#d9d9d9" stroke-width="0.80"/>
<rect x="22.40" y="184.75" width="679.10" height="12.93" fill="#ffcc99"/>
<rect x="4.00" y="184.75" width="18.40" height="12.93" fill="#f5f5f5"/>
<rect x="35.70" y="187.25" width="7.60" height="7.60" fill="#fbfbfb" stroke="#b5b5b5" stroke-width="0.6"/>
<path d="M37.5 190.95 L39.2 192.65 L42.2 189.15" fill="none" stroke="#4a4a4a" stroke-width="1.35"/>
<text x="151.60" y="193.95" font-size="7.80" fill="#4a4a4a" textLength="41.59" lengthAdjust="spacingAndGlyphs">BDC_CURSOR</text>
<text x="240.60" y="193.95" font-size="7.80" fill="#4a4a4a" textLength="43.73" lengthAdjust="spacingAndGlyphs">Cursor location</text>
<g transform="translate(329.00 190.60) rotate(45)">
<path d="M0 3 V6.8" fill="none" stroke="#707070" stroke-width="0.80"/>
<path d="M-2.5 -3.1 H2.5 L1.7 -1.8 L1.0 -0.2 L1.0 1.7 L3.1 1.7 L3.1 3.0 L-3.1 3.0 L-3.1 1.7 L-1.0 1.7 L-1.0 -0.2 L-1.7 -1.8 Z" fill="#8440bc"/>
</g>
<path d="M334.50 191.35 h4.6 M337.40 189.05 l2.2 2.3 l-2.2 2.3" fill="none" stroke="#3aaa80" stroke-width="1.30"/>
<path d="M341.00 187.95 h12 l-4.4 7 h-7.6 z" fill="#00a9ec"/>
<text x="356.80" y="193.95" font-size="7.80" fill="#4a4a4a" textLength="46.21" lengthAdjust="spacingAndGlyphs">Fix Single Value</text>
<text x="417.70" y="193.95" font-size="7.80" fill="#4a4a4a" textLength="73.60" lengthAdjust="spacingAndGlyphs">MSICHTAUSW-DYTXT(01)</text>
<text x="633.80" y="193.95" font-size="7.80" fill="#4a4a4a" textLength="16.63" lengthAdjust="spacingAndGlyphs">CHAR</text>
<text x="698.90" y="193.95" font-size="7.80" fill="#4a4a4a" text-anchor="end" textLength="7.51" lengthAdjust="spacingAndGlyphs">30</text>
<line x1="22.40" y1="197.28" x2="701.50" y2="197.28" stroke="#d9d9d9" stroke-width="0.80"/>
<rect x="22.40" y="197.68" width="679.10" height="12.93" fill="#ffcc99"/>
<rect x="4.00" y="197.68" width="18.40" height="12.93" fill="#f5f5f5"/>
<rect x="35.70" y="200.18" width="7.60" height="7.60" fill="#fbfbfb" stroke="#b5b5b5" stroke-width="0.6"/>
<path d="M37.5 203.88 L39.2 205.58 L42.2 202.08" fill="none" stroke="#4a4a4a" stroke-width="1.35"/>
<text x="151.60" y="206.88" font-size="7.80" fill="#4a4a4a" textLength="41.59" lengthAdjust="spacingAndGlyphs">BDC_OKCODE</text>
<text x="240.60" y="206.88" font-size="7.80" fill="#4a4a4a" textLength="68.79" lengthAdjust="spacingAndGlyphs">OK Code for this screen</text>
<g transform="translate(329.00 203.53) rotate(45)">
<path d="M0 3 V6.8" fill="none" stroke="#707070" stroke-width="0.80"/>
<path d="M-2.5 -3.1 H2.5 L1.7 -1.8 L1.0 -0.2 L1.0 1.7 L3.1 1.7 L3.1 3.0 L-3.1 3.0 L-3.1 1.7 L-1.0 1.7 L-1.0 -0.2 L-1.7 -1.8 Z" fill="#8440bc"/>
</g>
<path d="M334.50 204.28 h4.6 M337.40 201.98 l2.2 2.3 l-2.2 2.3" fill="none" stroke="#3aaa80" stroke-width="1.30"/>
<path d="M341.00 200.88 h12 l-4.4 7 h-7.6 z" fill="#00a9ec"/>
<text x="356.80" y="206.88" font-size="7.80" fill="#4a4a4a" textLength="46.21" lengthAdjust="spacingAndGlyphs">Fix Single Value</text>
<text x="417.70" y="206.88" font-size="7.80" fill="#4a4a4a" textLength="19.92" lengthAdjust="spacingAndGlyphs">=ENTR</text>
<text x="633.80" y="206.88" font-size="7.80" fill="#4a4a4a" textLength="16.63" lengthAdjust="spacingAndGlyphs">CHAR</text>
<text x="698.90" y="206.88" font-size="7.80" fill="#4a4a4a" text-anchor="end" textLength="7.51" lengthAdjust="spacingAndGlyphs">20</text>
<line x1="22.40" y1="210.21" x2="701.50" y2="210.21" stroke="#d9d9d9" stroke-width="0.80"/>
<rect x="22.40" y="210.61" width="679.10" height="12.93" fill="#ffcc99"/>
<rect x="4.00" y="210.61" width="18.40" height="12.93" fill="#f5f5f5"/>
<rect x="35.70" y="213.11" width="7.60" height="7.60" fill="#fbfbfb" stroke="#b5b5b5" stroke-width="0.6"/>
<path d="M37.5 216.81 L39.2 218.51 L42.2 215.01" fill="none" stroke="#4a4a4a" stroke-width="1.35"/>
<text x="151.60" y="219.81" font-size="7.80" fill="#4a4a4a" textLength="72.96" lengthAdjust="spacingAndGlyphs">MSICHTAUSW-KZSEL(01)</text>
<text x="240.60" y="219.81" font-size="7.80" fill="#4a4a4a" textLength="28.71" lengthAdjust="spacingAndGlyphs">Checkbox</text>
<g transform="translate(329.00 216.46) rotate(45)">
<path d="M0 3 V6.8" fill="none" stroke="#707070" stroke-width="0.80"/>
<path d="M-2.5 -3.1 H2.5 L1.7 -1.8 L1.0 -0.2 L1.0 1.7 L3.1 1.7 L3.1 3.0 L-3.1 3.0 L-3.1 1.7 L-1.0 1.7 L-1.0 -0.2 L-1.7 -1.8 Z" fill="#8440bc"/>
</g>
<path d="M334.50 217.21 h4.6 M337.40 214.91 l2.2 2.3 l-2.2 2.3" fill="none" stroke="#3aaa80" stroke-width="1.30"/>
<path d="M341.00 213.81 h12 l-4.4 7 h-7.6 z" fill="#00a9ec"/>
<text x="356.80" y="219.81" font-size="7.80" fill="#4a4a4a" textLength="46.21" lengthAdjust="spacingAndGlyphs">Fix Single Value</text>
<text x="417.70" y="219.81" font-size="7.80" fill="#4a4a4a" textLength="3.92" lengthAdjust="spacingAndGlyphs">X</text>
<text x="633.80" y="219.81" font-size="7.80" fill="#4a4a4a" textLength="16.63" lengthAdjust="spacingAndGlyphs">CHAR</text>
<text x="698.90" y="219.81" font-size="7.80" fill="#4a4a4a" text-anchor="end" textLength="3.75" lengthAdjust="spacingAndGlyphs">1</text>
<line x1="22.40" y1="223.14" x2="701.50" y2="223.14" stroke="#d9d9d9" stroke-width="0.80"/>
<rect x="22.40" y="223.54" width="679.10" height="12.93" fill="#c2c2ff"/>
<rect x="4.00" y="223.54" width="18.40" height="12.93" fill="#f5f5f5"/>
<rect x="35.70" y="226.04" width="7.60" height="7.60" fill="#fbfbfb" stroke="#b5b5b5" stroke-width="0.6"/>
<path d="M37.5 229.74 L39.2 231.44 L42.2 227.94" fill="none" stroke="#4a4a4a" stroke-width="1.35"/>
<rect x="65.60" y="225.64" width="12.20" height="8.80" fill="#fff" stroke="#8a8a8a" stroke-width="0.6"/>
<rect x="65.60" y="225.64" width="12.20" height="1.40" fill="#2a6ab5"/>
<text x="81.40" y="232.74" font-size="7.80" fill="#4a4a4a" textLength="54.90" lengthAdjust="spacingAndGlyphs">SAPLMGMM - 4004</text>
<text x="356.80" y="232.74" font-size="7.80" fill="#4a4a4a" textLength="15.60" lengthAdjust="spacingAndGlyphs">None</text>
<line x1="22.40" y1="236.07" x2="701.50" y2="236.07" stroke="#d9d9d9" stroke-width="0.80"/>
<rect x="22.40" y="236.47" width="679.10" height="12.93" fill="#ffcc99"/>
<rect x="4.00" y="236.47" width="18.40" height="12.93" fill="#f5f5f5"/>
<rect x="35.70" y="238.97" width="7.60" height="7.60" fill="#fbfbfb" stroke="#b5b5b5" stroke-width="0.6"/>
<path d="M37.5 242.67 L39.2 244.37 L42.2 240.87" fill="none" stroke="#4a4a4a" stroke-width="1.35"/>
<text x="151.60" y="245.67" font-size="7.80" fill="#4a4a4a" textLength="41.59" lengthAdjust="spacingAndGlyphs">BDC_OKCODE</text>
<text x="240.60" y="245.67" font-size="7.80" fill="#4a4a4a" textLength="68.79" lengthAdjust="spacingAndGlyphs">OK Code for this screen</text>
<g transform="translate(329.00 242.32) rotate(45)">
<path d="M0 3 V6.8" fill="none" stroke="#707070" stroke-width="0.80"/>
<path d="M-2.5 -3.1 H2.5 L1.7 -1.8 L1.0 -0.2 L1.0 1.7 L3.1 1.7 L3.1 3.0 L-3.1 3.0 L-3.1 1.7 L-1.0 1.7 L-1.0 -0.2 L-1.7 -1.8 Z" fill="#8440bc"/>
</g>
<path d="M334.50 243.07 h4.6 M337.40 240.77 l2.2 2.3 l-2.2 2.3" fill="none" stroke="#3aaa80" stroke-width="1.30"/>
<path d="M341.00 239.67 h12 l-4.4 7 h-7.6 z" fill="#00a9ec"/>
<text x="356.80" y="245.67" font-size="7.80" fill="#4a4a4a" textLength="46.21" lengthAdjust="spacingAndGlyphs">Fix Single Value</text>
<text x="417.70" y="245.67" font-size="7.80" fill="#4a4a4a" textLength="12.10" lengthAdjust="spacingAndGlyphs">=BU</text>
<text x="633.80" y="245.67" font-size="7.80" fill="#4a4a4a" textLength="16.63" lengthAdjust="spacingAndGlyphs">CHAR</text>
<text x="698.90" y="245.67" font-size="7.80" fill="#4a4a4a" text-anchor="end" textLength="7.51" lengthAdjust="spacingAndGlyphs">20</text>
<line x1="22.40" y1="249.00" x2="701.50" y2="249.00" stroke="#d9d9d9" stroke-width="0.80"/>
<rect x="22.40" y="249.40" width="679.10" height="12.93" fill="#ffcc99"/>
<rect x="4.00" y="249.40" width="18.40" height="12.93" fill="#f5f5f5"/>
<rect x="35.70" y="251.90" width="7.60" height="7.60" fill="#fbfbfb" stroke="#b5b5b5" stroke-width="0.6"/>
<path d="M37.5 255.60 L39.2 257.30 L42.2 253.80" fill="none" stroke="#4a4a4a" stroke-width="1.35"/>
<text x="151.60" y="258.60" font-size="7.80" fill="#4a4a4a" textLength="41.59" lengthAdjust="spacingAndGlyphs">BDC_CURSOR</text>
<text x="240.60" y="258.60" font-size="7.80" fill="#4a4a4a" textLength="43.73" lengthAdjust="spacingAndGlyphs">Cursor location</text>
<g transform="translate(329.00 255.25) rotate(45)">
<path d="M0 3 V6.8" fill="none" stroke="#707070" stroke-width="0.80"/>
<path d="M-2.5 -3.1 H2.5 L1.7 -1.8 L1.0 -0.2 L1.0 1.7 L3.1 1.7 L3.1 3.0 L-3.1 3.0 L-3.1 1.7 L-1.0 1.7 L-1.0 -0.2 L-1.7 -1.8 Z" fill="#8440bc"/>
</g>
<path d="M334.50 256.00 h4.6 M337.40 253.70 l2.2 2.3 l-2.2 2.3" fill="none" stroke="#3aaa80" stroke-width="1.30"/>
<path d="M341.00 252.60 h12 l-4.4 7 h-7.6 z" fill="#00a9ec"/>
<text x="356.80" y="258.60" font-size="7.80" fill="#4a4a4a" textLength="46.21" lengthAdjust="spacingAndGlyphs">Fix Single Value</text>
<text x="417.70" y="258.60" font-size="7.80" fill="#4a4a4a" textLength="41.05" lengthAdjust="spacingAndGlyphs">MARA-NTGEW</text>
<text x="633.80" y="258.60" font-size="7.80" fill="#4a4a4a" textLength="16.63" lengthAdjust="spacingAndGlyphs">CHAR</text>
<text x="698.90" y="258.60" font-size="7.80" fill="#4a4a4a" text-anchor="end" textLength="7.51" lengthAdjust="spacingAndGlyphs">30</text>
<line x1="22.40" y1="261.93" x2="701.50" y2="261.93" stroke="#d9d9d9" stroke-width="0.80"/>
<rect x="22.40" y="262.33" width="679.10" height="12.93" fill="#ccffcc"/>
<rect x="4.00" y="262.33" width="18.40" height="12.93" fill="#f5f5f5"/>
<rect x="35.70" y="264.83" width="7.60" height="7.60" fill="#fbfbfb" stroke="#b5b5b5" stroke-width="0.6"/>
<path d="M37.5 268.53 L39.2 270.23 L42.2 266.73" fill="none" stroke="#4a4a4a" stroke-width="1.35"/>
<text x="151.60" y="271.53" font-size="7.80" fill="#4a4a4a" textLength="41.38" lengthAdjust="spacingAndGlyphs">MARA-BRGEW</text>
<text x="240.60" y="271.53" font-size="7.80" fill="#4a4a4a" textLength="38.64" lengthAdjust="spacingAndGlyphs">Gross Weight</text>
<rect x="329.10" y="265.63" width="4.60" height="6.40" fill="#b9ccbf"/>
<line x1="329.10" y1="267.13" x2="333.70" y2="267.13" stroke="#7f9e89" stroke-width="0.50"/>
<line x1="329.10" y1="268.93" x2="333.70" y2="268.93" stroke="#7f9e89" stroke-width="0.50"/>
<line x1="329.10" y1="270.73" x2="333.70" y2="270.73" stroke="#7f9e89" stroke-width="0.50"/>
<line x1="331.50" y1="265.63" x2="331.50" y2="272.03" stroke="#7f9e89" stroke-width="0.50"/>
<rect x="324.90" y="264.83" width="5.40" height="7.90" fill="#1d6b40" rx="0.6"/>
<path d="M326.50 267.03 l2.2 3.5 M328.70 267.03 l-2.2 3.5" fill="none" stroke="#fff" stroke-width="0.90"/>
<path d="M334.50 268.93 h4.6 M337.40 266.63 l2.2 2.3 l-2.2 2.3" fill="none" stroke="#3aaa80" stroke-width="1.30"/>
<path d="M341.00 265.53 h12 l-4.4 7 h-7.6 z" fill="#00a9ec"/>
<text x="356.80" y="271.53" font-size="7.80" fill="#4a4a4a" textLength="38.34" lengthAdjust="spacingAndGlyphs">Excel To SAP</text>
<text x="417.70" y="271.53" font-size="7.80" fill="#4a4a4a" textLength="3.92" lengthAdjust="spacingAndGlyphs">B</text>
<text x="633.80" y="271.53" font-size="7.80" fill="#4a4a4a" textLength="12.39" lengthAdjust="spacingAndGlyphs">BCD</text>
<text x="698.90" y="271.53" font-size="7.80" fill="#4a4a4a" text-anchor="end" textLength="13.14" lengthAdjust="spacingAndGlyphs">13.3</text>
<line x1="22.40" y1="274.86" x2="701.50" y2="274.86" stroke="#d9d9d9" stroke-width="0.80"/>
<rect x="22.40" y="275.26" width="679.10" height="12.93" fill="#ccffff"/>
<rect x="4.00" y="275.26" width="18.40" height="12.93" fill="#f5f5f5"/>
<rect x="35.70" y="277.76" width="7.60" height="7.60" fill="#fbfbfb" stroke="#b5b5b5" stroke-width="0.6"/>
<path d="M37.5 281.46 L39.2 283.16 L42.2 279.66" fill="none" stroke="#4a4a4a" stroke-width="1.35"/>
<text x="151.60" y="284.46" font-size="7.80" fill="#4a4a4a" textLength="41.38" lengthAdjust="spacingAndGlyphs">MARA-BRGEW</text>
<text x="240.60" y="284.46" font-size="7.80" fill="#4a4a4a" textLength="38.64" lengthAdjust="spacingAndGlyphs">Gross Weight</text>
<path d="M324.9 278.26 h11.8 l-4.5 7.3 h-7.3 z" fill="#00a9ec"/>
<path d="M337.20 281.86 h4.6 M340.10 279.56 l2.2 2.3 l-2.2 2.3" fill="none" stroke="#3aaa80" stroke-width="1.30"/>
<rect x="347.90" y="278.46" width="4.60" height="6.40" fill="#b9ccbf"/>
<line x1="347.90" y1="279.96" x2="352.50" y2="279.96" stroke="#7f9e89" stroke-width="0.50"/>
<line x1="347.90" y1="281.76" x2="352.50" y2="281.76" stroke="#7f9e89" stroke-width="0.50"/>
<line x1="347.90" y1="283.56" x2="352.50" y2="283.56" stroke="#7f9e89" stroke-width="0.50"/>
<line x1="350.30" y1="278.46" x2="350.30" y2="284.86" stroke="#7f9e89" stroke-width="0.50"/>
<rect x="343.70" y="277.66" width="5.40" height="7.90" fill="#1d6b40" rx="0.6"/>
<path d="M345.30 279.86 l2.2 3.5 M347.50 279.86 l-2.2 3.5" fill="none" stroke="#fff" stroke-width="0.90"/>
<text x="356.80" y="284.46" font-size="7.80" fill="#4a4a4a" textLength="38.34" lengthAdjust="spacingAndGlyphs">SAP To Excel</text>
<text x="417.70" y="284.46" font-size="7.80" fill="#4a4a4a" textLength="4.24" lengthAdjust="spacingAndGlyphs">D</text>
<text x="633.80" y="284.46" font-size="7.80" fill="#4a4a4a" textLength="12.39" lengthAdjust="spacingAndGlyphs">BCD</text>
<text x="698.90" y="284.46" font-size="7.80" fill="#4a4a4a" text-anchor="end" textLength="13.14" lengthAdjust="spacingAndGlyphs">13.3</text>
<line x1="22.40" y1="287.79" x2="701.50" y2="287.79" stroke="#d9d9d9" stroke-width="0.80"/>
<rect x="22.40" y="288.19" width="679.10" height="12.93" fill="#ccffcc"/>
<rect x="4.00" y="288.19" width="18.40" height="12.93" fill="#f5f5f5"/>
<rect x="35.70" y="290.69" width="7.60" height="7.60" fill="#fbfbfb" stroke="#b5b5b5" stroke-width="0.6"/>
<path d="M37.5 294.39 L39.2 296.09 L42.2 292.59" fill="none" stroke="#4a4a4a" stroke-width="1.35"/>
<text x="151.60" y="297.39" font-size="7.80" fill="#4a4a4a" textLength="41.05" lengthAdjust="spacingAndGlyphs">MARA-NTGEW</text>
<text x="240.60" y="297.39" font-size="7.80" fill="#4a4a4a" textLength="31.38" lengthAdjust="spacingAndGlyphs">Net Weight</text>
<rect x="329.10" y="291.49" width="4.60" height="6.40" fill="#b9ccbf"/>
<line x1="329.10" y1="292.99" x2="333.70" y2="292.99" stroke="#7f9e89" stroke-width="0.50"/>
<line x1="329.10" y1="294.79" x2="333.70" y2="294.79" stroke="#7f9e89" stroke-width="0.50"/>
<line x1="329.10" y1="296.59" x2="333.70" y2="296.59" stroke="#7f9e89" stroke-width="0.50"/>
<line x1="331.50" y1="291.49" x2="331.50" y2="297.89" stroke="#7f9e89" stroke-width="0.50"/>
<rect x="324.90" y="290.69" width="5.40" height="7.90" fill="#1d6b40" rx="0.6"/>
<path d="M326.50 292.89 l2.2 3.5 M328.70 292.89 l-2.2 3.5" fill="none" stroke="#fff" stroke-width="0.90"/>
<path d="M334.50 294.79 h4.6 M337.40 292.49 l2.2 2.3 l-2.2 2.3" fill="none" stroke="#3aaa80" stroke-width="1.30"/>
<path d="M341.00 291.39 h12 l-4.4 7 h-7.6 z" fill="#00a9ec"/>
<text x="356.80" y="297.39" font-size="7.80" fill="#4a4a4a" textLength="38.34" lengthAdjust="spacingAndGlyphs">Excel To SAP</text>
<text x="417.70" y="297.39" font-size="7.80" fill="#4a4a4a" textLength="4.24" lengthAdjust="spacingAndGlyphs">C</text>
<text x="633.80" y="297.39" font-size="7.80" fill="#4a4a4a" textLength="12.39" lengthAdjust="spacingAndGlyphs">BCD</text>
<text x="698.90" y="297.39" font-size="7.80" fill="#4a4a4a" text-anchor="end" textLength="13.14" lengthAdjust="spacingAndGlyphs">13.3</text>
<line x1="22.40" y1="300.72" x2="701.50" y2="300.72" stroke="#d9d9d9" stroke-width="0.80"/>
<rect x="22.40" y="301.12" width="679.10" height="12.93" fill="#ccffff"/>
<rect x="4.00" y="301.12" width="18.40" height="12.93" fill="#f5f5f5"/>
<rect x="35.70" y="303.62" width="7.60" height="7.60" fill="#fbfbfb" stroke="#b5b5b5" stroke-width="0.6"/>
<path d="M37.5 307.32 L39.2 309.02 L42.2 305.52" fill="none" stroke="#4a4a4a" stroke-width="1.35"/>
<text x="151.60" y="310.32" font-size="7.80" fill="#4a4a4a" textLength="41.05" lengthAdjust="spacingAndGlyphs">MARA-NTGEW</text>
<text x="240.60" y="310.32" font-size="7.80" fill="#4a4a4a" textLength="31.38" lengthAdjust="spacingAndGlyphs">Net Weight</text>
<path d="M324.9 304.12 h11.8 l-4.5 7.3 h-7.3 z" fill="#00a9ec"/>
<path d="M337.20 307.72 h4.6 M340.10 305.42 l2.2 2.3 l-2.2 2.3" fill="none" stroke="#3aaa80" stroke-width="1.30"/>
<rect x="347.90" y="304.32" width="4.60" height="6.40" fill="#b9ccbf"/>
<line x1="347.90" y1="305.82" x2="352.50" y2="305.82" stroke="#7f9e89" stroke-width="0.50"/>
<line x1="347.90" y1="307.62" x2="352.50" y2="307.62" stroke="#7f9e89" stroke-width="0.50"/>
<line x1="347.90" y1="309.42" x2="352.50" y2="309.42" stroke="#7f9e89" stroke-width="0.50"/>
<line x1="350.30" y1="304.32" x2="350.30" y2="310.72" stroke="#7f9e89" stroke-width="0.50"/>
<rect x="343.70" y="303.52" width="5.40" height="7.90" fill="#1d6b40" rx="0.6"/>
<path d="M345.30 305.72 l2.2 3.5 M347.50 305.72 l-2.2 3.5" fill="none" stroke="#fff" stroke-width="0.90"/>
<text x="356.80" y="310.32" font-size="7.80" fill="#4a4a4a" textLength="38.34" lengthAdjust="spacingAndGlyphs">SAP To Excel</text>
<text x="417.70" y="310.32" font-size="7.80" fill="#4a4a4a" textLength="3.92" lengthAdjust="spacingAndGlyphs">E</text>
<text x="633.80" y="310.32" font-size="7.80" fill="#4a4a4a" textLength="12.39" lengthAdjust="spacingAndGlyphs">BCD</text>
<text x="698.90" y="310.32" font-size="7.80" fill="#4a4a4a" text-anchor="end" textLength="13.14" lengthAdjust="spacingAndGlyphs">13.3</text>
<line x1="22.40" y1="313.65" x2="701.50" y2="313.65" stroke="#d9d9d9" stroke-width="0.80"/>
<line x1="4.00" y1="106.20" x2="701.50" y2="106.20" stroke="#d2d2d2" stroke-width="0.90"/>
<line x1="4.00" y1="120.20" x2="701.50" y2="120.20" stroke="#d2d2d2" stroke-width="0.90"/>
<line x1="22.40" y1="94.20" x2="22.40" y2="314.05" stroke="#d9d9d9" stroke-width="0.90"/>
<line x1="56.50" y1="94.20" x2="56.50" y2="314.05" stroke="#d9d9d9" stroke-width="0.90"/>
<line x1="149.20" y1="94.20" x2="149.20" y2="314.05" stroke="#d9d9d9" stroke-width="0.90"/>
<line x1="238.40" y1="94.20" x2="238.40" y2="314.05" stroke="#d9d9d9" stroke-width="0.90"/>
<line x1="322.80" y1="94.20" x2="322.80" y2="314.05" stroke="#d9d9d9" stroke-width="0.90"/>
<line x1="415.20" y1="94.20" x2="415.20" y2="314.05" stroke="#d9d9d9" stroke-width="0.90"/>
<line x1="505.80" y1="94.20" x2="505.80" y2="314.05" stroke="#d9d9d9" stroke-width="0.90"/>
<line x1="561.40" y1="94.20" x2="561.40" y2="314.05" stroke="#d9d9d9" stroke-width="0.90"/>
<line x1="631.50" y1="94.20" x2="631.50" y2="314.05" stroke="#d9d9d9" stroke-width="0.90"/>
<line x1="661.30" y1="94.20" x2="661.30" y2="314.05" stroke="#d9d9d9" stroke-width="0.90"/>
<line x1="701.50" y1="94.20" x2="701.50" y2="314.05" stroke="#d9d9d9" stroke-width="0.90"/>
<rect x="22.10" y="275.10" width="405.90" height="12.50" fill="none" stroke="#ee2a2a" stroke-width="1.6"/>
<rect x="22.10" y="300.90" width="405.90" height="12.10" fill="none" stroke="#ee2a2a" stroke-width="1.6"/>
<rect x="4.00" y="94.20" width="697.50" height="282.10" fill="none" stroke="#c8c8c8" stroke-width="0.9"/>
<rect x="346.40" y="380.10" width="1.20" height="1.40" fill="#5a5a5a"/>
<rect x="349.15" y="380.10" width="1.20" height="1.40" fill="#808080"/>
<rect x="351.90" y="380.10" width="1.20" height="1.40" fill="#5a5a5a"/>
<rect x="354.65" y="380.10" width="1.20" height="1.40" fill="#808080"/>
<rect x="357.40" y="380.10" width="1.20" height="1.40" fill="#5a5a5a"/>
<rect x="7.30" y="388.40" width="1.60" height="9.30" fill="#cfcfcf"/>
<text x="14.30" y="396.00" font-size="7.60" fill="#444" textLength="99.10" lengthAdjust="spacingAndGlyphs">Use internal Excel Book (iBook)</text>
<path d="M115.80 392.30 h3.2 l-1.6 1.8 z" fill="#666"/>
<rect x="124.90" y="387.30" width="91.70" height="11.70" fill="#fff" stroke="#bdbdbd" stroke-width="0.7"/>
<rect x="207.30" y="387.60" width="9.00" height="11.10" fill="#ececec"/>
<line x1="207.30" y1="387.30" x2="207.30" y2="399.00" stroke="#b8b8b8" stroke-width="0.70"/>
<path d="M209.8 391.6 L211.8 393.6 L213.8 391.6" fill="none" stroke="#505050" stroke-width="1.10"/>
<text x="127.60" y="395.90" font-size="7.60" fill="#444" textLength="21.30" lengthAdjust="spacingAndGlyphs">Sheet1</text>
<circle cx="227.60" cy="392.90" r="4.85" fill="#3aaa7a"/>
<path d="M225.0 392.0 A2.8 2.8 0 0 1 230.2 391.6 M230.2 393.8 A2.8 2.8 0 0 1 225.0 394.2" fill="none" stroke="#fff" stroke-width="1.00"/>
<path d="M229.0 390.4 L230.6 391.9 L228.7 392.5 Z M226.2 395.4 L224.6 393.9 L226.5 393.3 Z" fill="#fff"/>
<rect x="239.20" y="388.60" width="8.40" height="9.00" fill="#fafafa" stroke="#9a9a9a" stroke-width="0.7"/>
<rect x="238.90" y="388.30" width="9.00" height="1.60" fill="#2a6ab5"/>
<line x1="241.40" y1="390.50" x2="241.40" y2="397.00" stroke="#a0a0a0" stroke-width="0.60"/>
<line x1="243.40" y1="390.50" x2="243.40" y2="397.00" stroke="#c0c0c0" stroke-width="0.60"/>
<line x1="239.20" y1="397.50" x2="243.50" y2="397.50" stroke="#3aaa5a" stroke-width="0.80"/>
<circle cx="246.00" cy="395.50" r="2.50" fill="#3a7bc1"/>
<circle cx="684.50" cy="393.00" r="4.85" fill="#d5472c"/>
<path d="M682.6 391.1 L686.4 394.9 M686.4 391.1 L682.6 394.9" fill="none" stroke="#fff" stroke-width="1.30"/>
<path d="M695.4 392 L697.7 394.3 L700 392" fill="none" stroke="#555" stroke-width="0.90"/>
<rect x="4.00" y="402.20" width="697.30" height="108.00" fill="#ffffff"/>
<rect x="4.00" y="402.20" width="697.30" height="12.10" fill="#f4f4f4"/>
<rect x="4.00" y="414.30" width="12.20" height="84.10" fill="#f4f4f4"/>
<rect x="227.20" y="402.20" width="163.80" height="12.10" fill="#dadada"/>
<rect x="4.00" y="449.70" width="12.20" height="11.80" fill="#dadada"/>
<rect x="16.20" y="414.30" width="172.10" height="35.40" fill="#ccffcc"/>
<rect x="188.30" y="414.30" width="202.70" height="35.40" fill="#ffff00"/>
<line x1="16.20" y1="449.70" x2="690.80" y2="449.70" stroke="#dedede" stroke-width="0.90"/>
<line x1="16.20" y1="461.50" x2="690.80" y2="461.50" stroke="#dedede" stroke-width="0.90"/>
<line x1="16.20" y1="474.10" x2="690.80" y2="474.10" stroke="#dedede" stroke-width="0.90"/>
<line x1="16.20" y1="486.40" x2="690.80" y2="486.40" stroke="#dedede" stroke-width="0.90"/>
<line x1="86.30" y1="402.20" x2="86.30" y2="414.30" stroke="#dedede" stroke-width="0.90"/>
<line x1="86.30" y1="449.70" x2="86.30" y2="498.30" stroke="#dedede" stroke-width="0.90"/>
<line x1="141.60" y1="402.20" x2="141.60" y2="414.30" stroke="#dedede" stroke-width="0.90"/>
<line x1="141.60" y1="449.70" x2="141.60" y2="498.30" stroke="#dedede" stroke-width="0.90"/>
<line x1="188.30" y1="402.20" x2="188.30" y2="414.30" stroke="#dedede" stroke-width="0.90"/>
<line x1="188.30" y1="449.70" x2="188.30" y2="498.30" stroke="#dedede" stroke-width="0.90"/>
<line x1="227.20" y1="402.20" x2="227.20" y2="414.30" stroke="#dedede" stroke-width="0.90"/>
<line x1="227.20" y1="449.70" x2="227.20" y2="498.30" stroke="#dedede" stroke-width="0.90"/>
<line x1="391.00" y1="402.20" x2="391.00" y2="414.30" stroke="#dedede" stroke-width="0.90"/>
<line x1="391.00" y1="449.70" x2="391.00" y2="498.30" stroke="#dedede" stroke-width="0.90"/>
<line x1="430.20" y1="402.20" x2="430.20" y2="498.30" stroke="#dedede" stroke-width="0.90"/>
<line x1="470.20" y1="402.20" x2="470.20" y2="498.30" stroke="#dedede" stroke-width="0.90"/>
<line x1="509.10" y1="402.20" x2="509.10" y2="498.30" stroke="#dedede" stroke-width="0.90"/>
<line x1="548.80" y1="402.20" x2="548.80" y2="498.30" stroke="#dedede" stroke-width="0.90"/>
<line x1="588.00" y1="402.20" x2="588.00" y2="498.30" stroke="#dedede" stroke-width="0.90"/>
<line x1="627.70" y1="402.20" x2="627.70" y2="498.30" stroke="#dedede" stroke-width="0.90"/>
<line x1="667.00" y1="402.20" x2="667.00" y2="498.30" stroke="#dedede" stroke-width="0.90"/>
<line x1="4.00" y1="414.30" x2="701.30" y2="414.30" stroke="#cfcfcf" stroke-width="0.90"/>
<line x1="16.20" y1="402.20" x2="16.20" y2="498.30" stroke="#cfcfcf" stroke-width="0.90"/>
<line x1="4.00" y1="449.70" x2="16.20" y2="449.70" stroke="#cfcfcf" stroke-width="0.90"/>
<line x1="4.00" y1="461.50" x2="16.20" y2="461.50" stroke="#cfcfcf" stroke-width="0.90"/>
<line x1="4.00" y1="474.10" x2="16.20" y2="474.10" stroke="#cfcfcf" stroke-width="0.90"/>
<line x1="4.00" y1="486.40" x2="16.20" y2="486.40" stroke="#cfcfcf" stroke-width="0.90"/>
<line x1="4.00" y1="498.30" x2="16.20" y2="498.30" stroke="#cfcfcf" stroke-width="0.90"/>
<rect x="9.80" y="404.60" width="5.80" height="7.60" fill="#c8d8cc" stroke="#7fa08a" stroke-width="0.5"/>
<line x1="9.80" y1="407.10" x2="15.60" y2="407.10" stroke="#7fa08a" stroke-width="0.50"/>
<line x1="9.80" y1="409.60" x2="15.60" y2="409.60" stroke="#7fa08a" stroke-width="0.50"/>
<line x1="12.70" y1="404.60" x2="12.70" y2="412.20" stroke="#7fa08a" stroke-width="0.50"/>
<rect x="5.00" y="403.60" width="6.60" height="9.60" fill="#1e7145"/>
<path d="M6.6 405.8 l3.2 5 M9.8 405.8 l-3.2 5" fill="none" stroke="#fff" stroke-width="1.00"/>
<text x="51.25" y="410.60" font-size="7.40" fill="#555" text-anchor="middle" textLength="4.40" lengthAdjust="spacingAndGlyphs">A</text>
<text x="113.95" y="410.60" font-size="7.40" fill="#555" text-anchor="middle" textLength="4.40" lengthAdjust="spacingAndGlyphs">B</text>
<text x="164.95" y="410.60" font-size="7.40" fill="#555" text-anchor="middle" textLength="4.77" lengthAdjust="spacingAndGlyphs">C</text>
<text x="207.75" y="410.60" font-size="7.40" fill="#555" text-anchor="middle" textLength="4.77" lengthAdjust="spacingAndGlyphs">D</text>
<text x="309.10" y="410.60" font-size="7.40" fill="#555" text-anchor="middle" textLength="4.40" lengthAdjust="spacingAndGlyphs">E</text>
<text x="410.60" y="410.60" font-size="7.40" fill="#555" text-anchor="middle" textLength="4.03" lengthAdjust="spacingAndGlyphs">F</text>
<text x="450.20" y="410.60" font-size="7.40" fill="#555" text-anchor="middle" textLength="5.13" lengthAdjust="spacingAndGlyphs">G</text>
<text x="489.65" y="410.60" font-size="7.40" fill="#555" text-anchor="middle" textLength="4.77" lengthAdjust="spacingAndGlyphs">H</text>
<text x="528.95" y="410.60" font-size="7.40" fill="#555" text-anchor="middle" textLength="1.83" lengthAdjust="spacingAndGlyphs">I</text>
<text x="568.40" y="410.60" font-size="7.40" fill="#555" text-anchor="middle" textLength="3.30" lengthAdjust="spacingAndGlyphs">J</text>
<text x="607.85" y="410.60" font-size="7.40" fill="#555" text-anchor="middle" textLength="4.40" lengthAdjust="spacingAndGlyphs">K</text>
<text x="647.35" y="410.60" font-size="7.40" fill="#555" text-anchor="middle" textLength="3.67" lengthAdjust="spacingAndGlyphs">L</text>
<text x="686.00" y="410.60" font-size="7.40" fill="#555" text-anchor="middle" textLength="5.50" lengthAdjust="spacingAndGlyphs">M</text>
<text x="10.10" y="434.60" font-size="7.40" fill="#555" text-anchor="middle" textLength="3.67" lengthAdjust="spacingAndGlyphs">1</text>
<text x="10.10" y="458.20" font-size="7.40" fill="#555" text-anchor="middle" textLength="3.67" lengthAdjust="spacingAndGlyphs">2</text>
<text x="10.10" y="470.40" font-size="7.40" fill="#555" text-anchor="middle" textLength="3.67" lengthAdjust="spacingAndGlyphs">3</text>
<text x="10.10" y="482.85" font-size="7.40" fill="#555" text-anchor="middle" textLength="3.67" lengthAdjust="spacingAndGlyphs">4</text>
<text x="10.10" y="494.95" font-size="7.40" fill="#555" text-anchor="middle" textLength="3.67" lengthAdjust="spacingAndGlyphs">5</text>
<text x="17.80" y="446.70" font-size="9.00" fill="#262626" textLength="65.40" lengthAdjust="spacingAndGlyphs">Material Number</text>
<text x="87.50" y="446.70" font-size="9.00" fill="#262626" textLength="50.30" lengthAdjust="spacingAndGlyphs">Gross Weight</text>
<text x="142.30" y="446.70" font-size="9.00" fill="#262626" textLength="42.60" lengthAdjust="spacingAndGlyphs">Net Weight</text>
<text x="189.50" y="446.70" font-size="9.00" fill="#262626" textLength="23.10" lengthAdjust="spacingAndGlyphs">Status</text>
<text x="228.40" y="424.80" font-size="8.60" fill="#262626" textLength="154.80" lengthAdjust="spacingAndGlyphs">SAPUSER-DM0-800 26-Nov-2016 - 5:29 PM</text>
<text x="228.40" y="435.50" font-size="8.60" fill="#262626" textLength="105.80" lengthAdjust="spacingAndGlyphs">Pver: 5.10.6.29420, Fver:13.2</text>
<text x="228.40" y="446.40" font-size="8.60" fill="#262626" textLength="129.80" lengthAdjust="spacingAndGlyphs">MM02_26112016052747232.itf [AX]</text>
<text x="17.80" y="458.70" font-size="8.60" fill="#262626" font-weight="bold" textLength="28.80" lengthAdjust="spacingAndGlyphs">100-100</text>
<text x="87.50" y="458.70" font-size="8.60" fill="#262626" font-weight="bold" textLength="12.50" lengthAdjust="spacingAndGlyphs">400</text>
<text x="142.30" y="458.70" font-size="8.60" fill="#262626" font-weight="bold" textLength="12.50" lengthAdjust="spacingAndGlyphs">300</text>
<text x="189.50" y="458.70" font-size="8.60" fill="#262626" textLength="34.40" lengthAdjust="spacingAndGlyphs">S:M3-801</text>
<text x="228.40" y="459.20" font-size="8.60" fill="#262626" textLength="95.40" lengthAdjust="spacingAndGlyphs">Material 100-100 changed</text>
<rect x="226.80" y="449.20" width="164.90" height="12.30" fill="none" stroke="#2f5597" stroke-width="1.4"/>
<rect x="390.30" y="459.90" width="3.20" height="3.20" fill="#2f5597"/>
<rect x="690.80" y="414.30" width="10.50" height="84.00" fill="#f0f0f0"/>
<rect x="691.80" y="425.00" width="8.60" height="53.50" fill="#c9c9c9"/>
<path d="M693.8 421 L695.9 418.9 L698 421" fill="none" stroke="#606060" stroke-width="1.00"/>
<path d="M693.8 492.6 L695.9 494.7 L698 492.6" fill="none" stroke="#606060" stroke-width="1.00"/>
<rect x="4.00" y="498.30" width="686.80" height="11.90" fill="#f0f0f0"/>
<rect x="15.30" y="499.80" width="613.50" height="9.70" fill="#c9c9c9"/>
<path d="M10.9 502.2 L8.8 504.5 L10.9 506.8" fill="none" stroke="#505050" stroke-width="1.30"/>
<path d="M684.8 502.3 L686.8 504.3 L684.8 506.3" fill="none" stroke="#606060" stroke-width="1.00"/>
<rect x="690.80" y="498.30" width="10.50" height="11.90" fill="#f7f7f7"/>
<rect x="4.00" y="402.20" width="697.30" height="108.00" fill="none" stroke="#c6c6c6" stroke-width="0.9"/>
<rect x="0.00" y="0.00" width="706.00" height="1.00" fill="#4a9bb8"/>
<rect x="0.00" y="0.00" width="1.00" height="515.00" fill="#4a9bb8"/>
<rect x="705.00" y="0.00" width="1.00" height="515.00" fill="#4a9bb8"/>
<rect x="0.00" y="513.50" width="706.00" height="1.50" fill="#4a9bb8"/>
</svg>
</body></html>
